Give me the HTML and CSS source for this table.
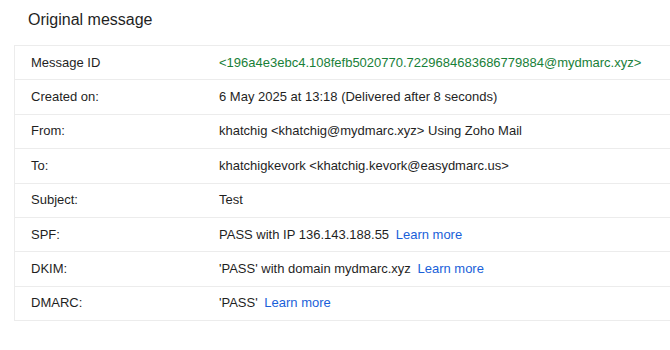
FILE: index.html
```html
<!DOCTYPE html>
<html>
<head>
<meta charset="utf-8">
<link rel="stylesheet" href="styles.css">
</head>
<body>
<div class="page">
  <h1 class="title">Original message</h1>
  <div class="table">
    <div class="row"><div class="label">Message ID</div><div class="value msgid">&lt;196a4e3ebc4.108fefb5020770.7229684683686779884@mydmarc.xyz&gt;</div></div>
    <div class="row"><div class="label">Created on:</div><div class="value">6 May 2025 at 13:18 (Delivered after 8 seconds)</div></div>
    <div class="row"><div class="label">From:</div><div class="value">khatchig &lt;khatchig@mydmarc.xyz&gt; Using Zoho Mail</div></div>
    <div class="row"><div class="label">To:</div><div class="value">khatchigkevork &lt;khatchig.kevork@easydmarc.us&gt;</div></div>
    <div class="row"><div class="label">Subject:</div><div class="value">Test</div></div>
    <div class="row"><div class="label">SPF:</div><div class="value">PASS with IP 136.143.188.55 <a class="link" href="#">Learn more</a></div></div>
    <div class="row"><div class="label">DKIM:</div><div class="value">'PASS' with domain mydmarc.xyz <a class="link" href="#">Learn more</a></div></div>
    <div class="row"><div class="label">DMARC:</div><div class="value">'PASS' <a class="link" href="#">Learn more</a></div></div>
  </div>
</div>
</body>
</html>
```
FILE: styles.css
```css
html, body {
  margin: 0;
  padding: 0;
  background: #fff;
  overflow: hidden;
}
body {
  font-family: "Liberation Sans", Arial, sans-serif;
  color: #1f1f1f;
}
.page {
  padding: 10px 0 0 14px;
}
.title {
  margin: 0 0 15px 14px;
  font-size: 16px;
  font-weight: normal;
  line-height: 20px;
  color: #1f1f1f;
}
.table {
  width: 700px;
  border: 1px solid #ececec;
  border-right: none;
  border-bottom: none;
}
.row {
  display: flex;
  align-items: center;
  height: 33.4px;
  border-bottom: 1px solid #ececec;
  font-size: 13px;
  line-height: 16px;
}
.label {
  width: 188px;
  padding-left: 16px;
  flex-shrink: 0;
}
.value {
  white-space: nowrap;
}
.msgid {
  color: #188038;
}
.link {
  color: #1a5fd9;
  text-decoration: none;
  margin-left: 3px;
}
```
